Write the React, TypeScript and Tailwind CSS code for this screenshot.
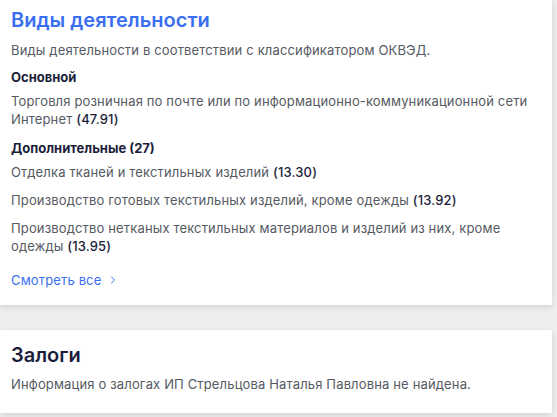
import { ChevronRight } from "lucide-react";

const extra = [
  { name: "Отделка тканей и текстильных изделий", code: "13.30" },
  { name: "Производство готовых текстильных изделий, кроме одежды", code: "13.92" },
  {
    name: "Производство нетканых текстильных материалов и изделий из них, кроме одежды",
    code: "13.95",
  },
];

function Activity({ name, code }: { name: string; code: string }) {
  return (
    <p className="text-[13px] leading-[18px] tracking-[0.15px] text-[#555a63]">
      {name} <span className="font-medium text-[#1b1e3a]">({code})</span>
    </p>
  );
}

export default function App() {
  return (
    <div
      className="min-h-[417px] bg-[#eeeeee] pr-[5px]"
      style={{ fontFamily: "Inter, 'Noto Sans', sans-serif" }}
    >
      <section className="h-[305px] bg-white px-[11px] pt-[6px] shadow-[0_2px_6px_rgba(0,0,0,0.12)]">
        <h2 className="text-[20px] font-semibold leading-[28px] text-[#3b6ff2]">
          Виды деятельности
        </h2>
        <p className="mt-[7px] text-[13px] leading-[18px] tracking-[0.15px] text-[#555a63]">
          Виды деятельности в соответствии с классификатором ОКВЭД.
        </p>

        <h3 className="mt-[9px] text-[13px] font-bold leading-[18px] text-[#1b1e3a]">
          Основной
        </h3>
        <div className="mt-[6px]">
          <Activity
            name="Торговля розничная по почте или по информационно-коммуникационной сети Интернет"
            code="47.91"
          />
        </div>

        <h3 className="mt-[11px] text-[13px] font-bold leading-[18px] text-[#1b1e3a]">
          Дополнительные (27)
        </h3>
        <div className="mt-[6px] flex flex-col gap-[10px]">
          {extra.map((a) => (
            <Activity key={a.code} name={a.name} code={a.code} />
          ))}
        </div>

        <a className="mt-[16px] flex items-center gap-[6px] text-[13px] leading-[18px] tracking-[0.15px] text-[#3b6ff2]">
          Смотреть все
          <ChevronRight className="h-[12px] w-[12px]" strokeWidth={2} />
        </a>
      </section>

      <section className="mt-[25px] h-[83px] bg-white px-[11px] pt-[11px] shadow-[0_2px_6px_rgba(0,0,0,0.12)]">
        <h2 className="text-[20px] font-semibold leading-[28px] text-[#1b1e3a]">Залоги</h2>
        <p className="mt-[6px] text-[13px] leading-[18px] tracking-[0.15px] text-[#555a63]">
          Информация о залогах ИП Стрельцова Наталья Павловна не найдена.
        </p>
      </section>
    </div>
  );
}
